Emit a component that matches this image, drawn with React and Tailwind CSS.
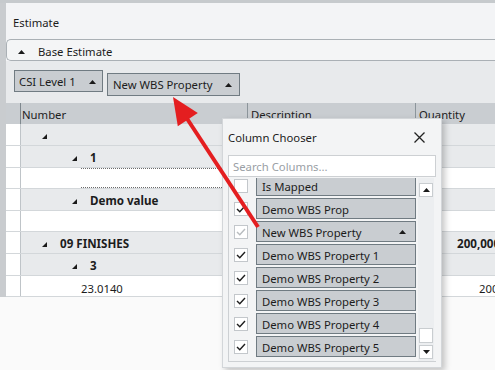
import React from "react";

const Up = ({ className = "" }) => (
  <svg width="7" height="4" viewBox="0 0 7 4" className={className}>
    <polygon points="0,4 3.5,0 7,4" fill="#1a1a1a" />
  </svg>
);
const Down = ({ className = "" }) => (
  <svg width="7" height="4" viewBox="0 0 7 4" className={className}>
    <polygon points="0,0 3.5,4 7,0" fill="#1a1a1a" />
  </svg>
);
const Exp = () => (
  <svg width="5" height="5" viewBox="0 0 5 5" className="shrink-0">
    <polygon points="5,0 5,5 0,5" fill="#1a1a1a" />
  </svg>
);

const Check = ({ state }) => (
  <div className="w-[14px] h-[14px] shrink-0 bg-white border border-[#c3c7cb] flex items-center justify-center">
    {state !== "off" && (
      <svg width="10" height="8" viewBox="0 0 10 8">
        <path
          d="M1 4 L3.8 6.8 L9 1"
          fill="none"
          stroke={state === "dim" ? "#b8bcbf" : "#1e1e1e"}
          strokeWidth="1.4"
        />
      </svg>
    )}
  </div>
);

const rows = [
  { g: true, level: 0, text: "", h: "h-[22px]" },
  { g: true, level: 1, text: "1", h: "h-[22px]" },
  { g: false, focus: true, h: "h-[21px]" },
  { g: true, level: 1, text: "Demo value", h: "h-[22px]" },
  { g: false, h: "h-[21px]" },
  { g: true, level: 0, text: "09 FINISHES", qty: "200,000.00", h: "h-[22px]" },
  { g: true, level: 1, text: "3", h: "h-[22px]" },
  { g: false, num: "23.0140", qty: "200,000.00", h: "h-[21px]" },
];

const items = [
  { t: "Is Mapped", c: "off" },
  { t: "Demo WBS Prop", c: "on" },
  { t: "New WBS Property", c: "dim", arrow: true },
  { t: "Demo WBS Property 1", c: "on" },
  { t: "Demo WBS Property 2", c: "on" },
  { t: "Demo WBS Property 3", c: "on" },
  { t: "Demo WBS Property 4", c: "on" },
  { t: "Demo WBS Property 5", c: "on" },
];

export default function App() {
  return (
    <div
      className="relative w-[495px] h-[370px] overflow-hidden bg-[#fafafa] text-[11.3px] text-[#1c1c1c] leading-none"
      style={{ fontFamily: '"Noto Sans", "Open Sans", sans-serif' }}
    >
      <div className="h-[3px] bg-[#c6cacd]" />
      <div className="flex">
        <div className="w-[6px] shrink-0 bg-[#c9cccf]" />
        <div className="flex-1 min-w-0 flex flex-col bg-[#f3f4f6]">
          <div className="h-[36px] flex items-center pl-[7px] pt-[4px]">Estimate</div>
          <div className="h-[22px] flex items-center border border-r-0 border-[#aab0b5] rounded-l-[5px] bg-[#f4f5f6] pt-[3px]">
            <Up className="ml-[11px]" />
            <span className="ml-[13px]">Base Estimate</span>
          </div>
          <div className="h-[42px] bg-[#e8eaec] flex items-start pl-[8px] gap-[4px]">
            <div className="mt-[9px] w-[89px] h-[22px] bg-[#c9cdd1] border border-[#707b82] flex items-center pl-[4px] pr-[6px] pt-[2px] justify-between">
              <span>CSI Level 1</span>
              <Up />
            </div>
            <div className="mt-[12px] w-[133px] h-[23px] bg-[#c9cdd1] border border-[#707b82] flex items-center pl-[5px] pr-[7px] pt-[1px] justify-between">
              <span>New WBS Property</span>
              <Up />
            </div>
          </div>
          <div className="w-[600px] bg-white">
            <div className="h-[21px] bg-[#c9cdd1] flex text-[#222]">
              <div className="w-[15px] border-r border-[#7f888e]" />
              <div className="w-[227px] border-r border-[#8c959b] flex items-center pl-[1px] pt-[3px]">Number</div>
              <div className="w-[168px] border-r border-[#8c959b] flex items-center pl-[3px] pt-[3px]">Description</div>
              <div className="flex-1 flex items-center pl-[3px] pt-[3px]">Quantity</div>
            </div>
            {rows.map((r, i) => (
              <div key={i} className={`${r.h} flex border-b border-[#d3d7da]`}>
                <div className="w-[15px] shrink-0 bg-white border-r border-[#bfc4c8]" />
                {r.g ? (
                  <div className="flex-1 flex items-center bg-[#e8eaec] font-bold text-[11.6px] pt-[3px]">
                    <div className={`flex items-center ${r.level === 0 ? "pl-[21px]" : "pl-[51px]"} w-[394px]`}>
                      <Exp />
                      <span className="ml-[13px]">{r.text}</span>
                    </div>
                    {r.qty && <span className="pl-[42px]">{r.qty}</span>}
                  </div>
                ) : (
                  <div className="flex-1 flex items-stretch bg-white">
                    <div className="w-[227px] pl-[60px] flex items-stretch">
                      {r.focus ? (
                        <div className="flex-1 border-y border-dotted border-[#6b6b6b]" />
                      ) : (
                        <div className="flex items-center pt-[5px]">{r.num}</div>
                      )}
                    </div>
                    <div className="w-[168px]" />
                    {r.qty && <div className="flex items-center pl-[63px] pt-[5px]">{r.qty}</div>}
                  </div>
                )}
              </div>
            ))}
          </div>
        </div>
      </div>

      <div className="absolute left-[222px] top-[118px] w-[220px] h-[250px] bg-[#f3f4f5] border border-[#d3d6d9] shadow-[3px_3px_6px_rgba(0,0,0,0.22)] flex flex-col">
        <div className="h-[36px] shrink-0 flex items-center justify-between pl-[5px] pr-[16px]">
          <span className="pt-[1px]">Column Chooser</span>
          <svg width="11" height="11" viewBox="0 0 11 11">
            <path d="M0.5 0.5 L10.5 10.5 M10.5 0.5 L0.5 10.5" stroke="#222" strokeWidth="1.3" />
          </svg>
        </div>
        <div className="mx-[5px] h-[22px] shrink-0 bg-white border border-[#cdd0d3] flex items-center pl-[4px] pt-[2px] text-[#9aa0a5]">
          Search Columns...
        </div>
        <div className="mx-[5px] mt-[1px] h-[184px] shrink-0 border-l border-b border-[#cdd0d3] flex overflow-hidden">
          <div className="flex-1 min-w-0 overflow-hidden">
            <div className="-mt-[3px] flex flex-col gap-[2px]">
              {items.map((it, i) => (
                <div key={i} className="h-[21px] flex items-center">
                  <div className="w-[27px] pl-[5px] flex items-center">
                    <Check state={it.c} />
                  </div>
                  <div className="w-[160px] h-[21px] bg-[#c9cdd1] border border-[#707b82] flex items-center justify-between pl-[5px] pr-[9px] pt-[3px]">
                    <span>{it.t}</span>
                    {it.arrow && <Up className="-mt-[3px]" />}
                  </div>
                </div>
              ))}
            </div>
          </div>
          <div className="w-[16px] shrink-0 bg-[#eceef0] flex flex-col items-center pt-[5px] pb-[2px] mr-[2px]">
            <div className="w-[14px] h-[14px] bg-white border border-[#c9cdd0] flex items-center justify-center">
              <Up />
            </div>
            <div className="flex-1" />
            <div className="w-[14px] h-[15px] bg-white border border-[#c9cdd0] mb-[2px]" />
            <div className="w-[14px] h-[14px] bg-white border border-[#c9cdd0] flex items-center justify-center">
              <Down />
            </div>
          </div>
        </div>
      </div>

      <svg className="absolute left-0 top-0 pointer-events-none" width="495" height="370" viewBox="0 0 495 370">
        <line x1="258" y1="227" x2="184" y2="114" stroke="#e41e20" strokeWidth="4" />
        <polygon points="173,97 197.8,113 177.8,126.2" fill="#e41e20" />
      </svg>
    </div>
  );
}
